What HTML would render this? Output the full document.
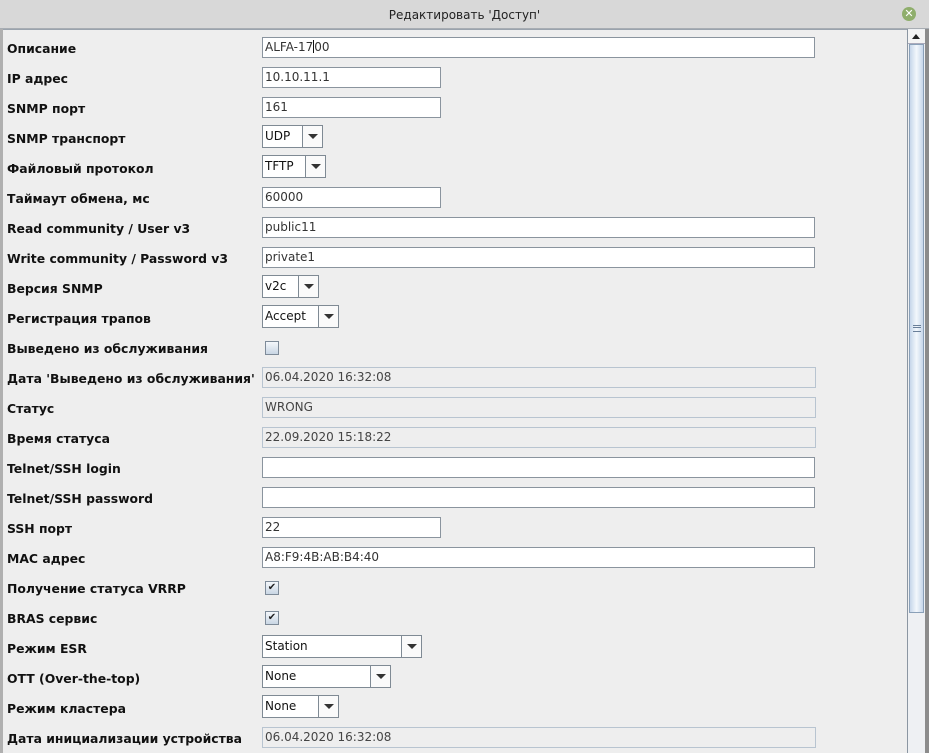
<!DOCTYPE html>
<html><head><meta charset="utf-8"><style>
body{margin:0;width:929px;height:753px;overflow:hidden;background:#eeeeee;font-family:"DejaVu Sans","Liberation Sans",sans-serif;position:relative}
.t{position:absolute;left:0;top:0;width:929px;height:28px;background:#d8d8d8;border-bottom:1px solid #a8adb3}
.t span{position:absolute;left:0;width:929px;text-align:center;top:8px;font-size:12px;color:#222}
.x{position:absolute;left:902px;top:7px;width:14px;height:14px;border-radius:50%;background:#8fae6c;color:#fff;font-size:11px;font-weight:bold;text-align:center;line-height:14px}
.top{position:absolute;top:0;height:3px}
.l{position:absolute;left:7px;font-size:12.4px;font-weight:bold;color:#111;line-height:16px;margin-top:1px}
.f{position:absolute;left:262px;border:1px solid #8a949e;background:#fff;font-size:12px;color:#333;line-height:19px;padding-left:2px;box-sizing:border-box;height:21px}
.d{background:#eeeeee;border-color:#b8c4d0;color:#444}
.c{position:absolute;left:262px;height:23px;border:1px solid #7f8a94;background:#fff;box-sizing:border-box;font-size:12px;line-height:21px;padding-left:2px;color:#111}
.c b{position:absolute;right:0;top:0;width:19px;height:21px;border-left:1px solid #7f8a94;background:#fafafa}
.c b:after{content:"";position:absolute;left:5px;top:8px;border-left:5px solid transparent;border-right:5px solid transparent;border-top:5px solid #333}
.cb{position:absolute;left:265px;width:12px;height:12px;border:1px solid #7e8b99;background:linear-gradient(#f4f7fb,#c9d6e4);font-size:10px;line-height:12px;text-align:center;font-weight:bold;color:#222}
</style></head><body>
<div class="top" style="left:698px;width:55px;background:#1aa7c8"></div>
<div class="top" style="left:765px;width:53px;background:#ccc800"></div>
<div class="top" style="left:830px;width:53px;background:#d07c30"></div>
<div class="t"><span>Редактировать 'Доступ'</span><div class="x">✕</div></div>
<div style="position:absolute;left:0;top:29px;width:3px;height:724px;background:#b0b0b0"></div>
<div style="position:absolute;left:3px;top:29px;width:923px;height:1px;background:#9aa3ad"></div>
<div style="position:absolute;left:925px;top:29px;width:4px;height:724px;background:#8c8c8c"></div>
<div style="position:absolute;left:907px;top:29px;width:18px;height:724px;background:#eef0f3;border-left:1px solid #8b96a2;box-sizing:border-box"></div>
<div style="position:absolute;left:908px;top:30px;width:17px;height:13px;background:#f4f4f4;border-bottom:1px solid #aab"></div>
<div style="position:absolute;left:912px;top:34px;border-left:4px solid transparent;border-right:4px solid transparent;border-bottom:5px solid #222"></div>
<div style="position:absolute;left:909px;top:44px;width:15px;height:569px;background:linear-gradient(90deg,#c6d6ea,#f3f7fc 50%,#c6d6ea);border:1px solid #8aa0b8;box-sizing:border-box"></div>
<div style="position:absolute;left:913px;top:325px;width:8px;height:5px;border-top:1px solid #6a7f99;border-bottom:1px solid #6a7f99"><div style="margin-top:1px;height:1px;background:#6a7f99"></div></div>

<div class="l" style="top:40px">Описание</div><div class="f" style="top:37px;width:553px">ALFA-17<span style="display:inline-block;width:1px;height:13px;background:#111;vertical-align:-2px"></span>00</div>
<div class="l" style="top:70px">IP адрес</div><div class="f" style="top:67px;width:179px">10.10.11.1</div>
<div class="l" style="top:100px">SNMP порт</div><div class="f" style="top:97px;width:179px">161</div>
<div class="l" style="top:130px">SNMP транспорт</div><div class="c" style="top:125px;width:61px">UDP<b></b></div>
<div class="l" style="top:160px">Файловый протокол</div><div class="c" style="top:155px;width:64px">TFTP<b></b></div>
<div class="l" style="top:190px">Таймаут обмена, мс</div><div class="f" style="top:187px;width:179px">60000</div>
<div class="l" style="top:220px">Read community / User v3</div><div class="f" style="top:217px;width:553px">public11</div>
<div class="l" style="top:250px">Write community / Password v3</div><div class="f" style="top:247px;width:553px">private1</div>
<div class="l" style="top:280px">Версия SNMP</div><div class="c" style="top:275px;width:57px">v2c<b></b></div>
<div class="l" style="top:310px">Регистрация трапов</div><div class="c" style="top:305px;width:77px">Accept<b></b></div>
<div class="l" style="top:340px">Выведено из обслуживания</div><div class="cb" style="top:341px"></div>
<div class="l" style="top:370px">Дата 'Выведено из обслуживания'</div><div class="f d" style="top:367px;width:554px">06.04.2020 16:32:08</div>
<div class="l" style="top:400px">Статус</div><div class="f d" style="top:397px;width:554px">WRONG</div>
<div class="l" style="top:430px">Время статуса</div><div class="f d" style="top:427px;width:554px">22.09.2020 15:18:22</div>
<div class="l" style="top:460px">Telnet/SSH login</div><div class="f" style="top:457px;width:553px"></div>
<div class="l" style="top:490px">Telnet/SSH password</div><div class="f" style="top:487px;width:553px"></div>
<div class="l" style="top:520px">SSH порт</div><div class="f" style="top:517px;width:179px">22</div>
<div class="l" style="top:550px">MAC адрес</div><div class="f" style="top:547px;width:553px">A8:F9:4B:AB:B4:40</div>
<div class="l" style="top:580px">Получение статуса VRRP</div><div class="cb" style="top:581px">✔</div>
<div class="l" style="top:610px">BRAS сервис</div><div class="cb" style="top:611px">✔</div>
<div class="l" style="top:640px">Режим ESR</div><div class="c" style="top:635px;width:160px">Station<b></b></div>
<div class="l" style="top:670px">OTT (Over-the-top)</div><div class="c" style="top:665px;width:129px">None<b></b></div>
<div class="l" style="top:700px">Режим кластера</div><div class="c" style="top:695px;width:77px">None<b></b></div>
<div class="l" style="top:730px">Дата инициализации устройства</div><div class="f d" style="top:727px;width:554px">06.04.2020 16:32:08</div>
</body></html>
